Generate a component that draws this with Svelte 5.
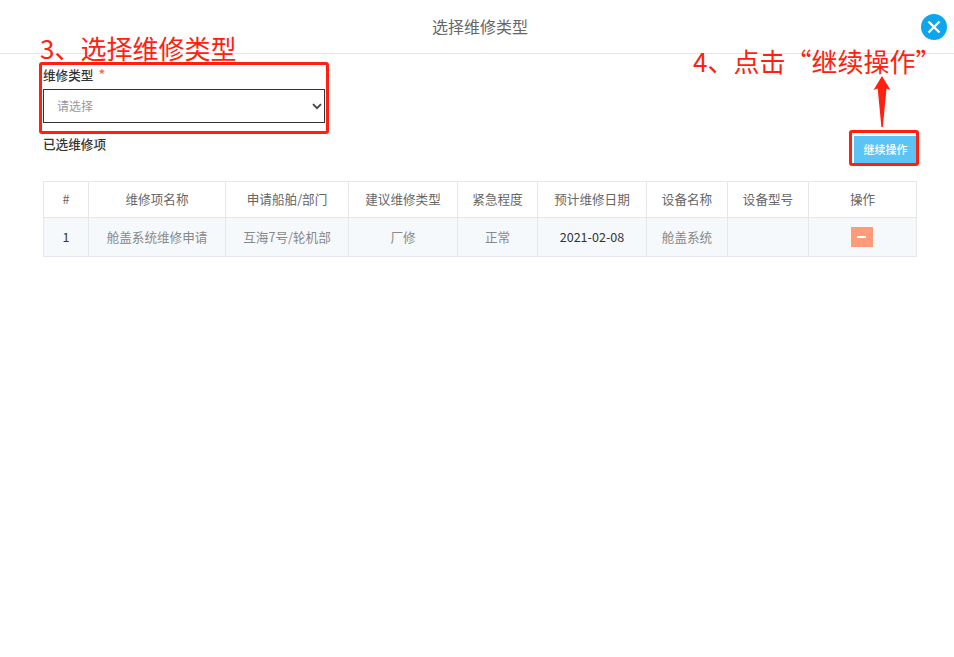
<script>
	const columns = ['#', '维修项名称', '申请船舶/部门', '建议维修类型', '紧急程度', '预计维修日期', '设备名称', '设备型号', '操作'];
	const rows = [
		{ no: '1', name: '舱盖系统维修申请', dept: '互海7号/轮机部', type: '厂修', level: '正常', date: '2021-02-08', device: '舱盖系统', model: '' }
	];
</script>

<div class="page">
	<header class="head">
		<h2>选择维修类型</h2>
		<button class="close" aria-label="关闭">
			<svg width="26" height="26" viewBox="0 0 26 26">
				<circle cx="13" cy="13" r="13" fill="#0ea5ec" />
				<path d="M7.5 7.5 18.5 18.5M18.5 7.5 7.5 18.5" stroke="#fff" stroke-width="2.4" fill="none" />
			</svg>
		</button>
	</header>

	<section class="body">
		<div class="field">
			<div class="label">维修类型<span class="req">*</span></div>
			<div class="select-wrap">
				<select class="select">
					<option>请选择</option>
				</select>
				<svg class="chevron" width="10" height="7" viewBox="0 0 10 7">
					<path d="M1 1.2 5 5.2 9 1.2" stroke="#444" stroke-width="1.8" fill="none" />
				</svg>
			</div>
		</div>

		<div class="bar">
			<span class="bar-title">已选维修项</span>
			<button class="go">继续操作</button>
		</div>

		<table>
			<colgroup>
				<col style="width:45px" />
				<col style="width:137px" />
				<col style="width:123px" />
				<col style="width:109px" />
				<col style="width:80px" />
				<col style="width:109px" />
				<col style="width:81px" />
				<col style="width:81px" />
				<col />
			</colgroup>
			<thead>
				<tr>
					{#each columns as c}
						<th>{c}</th>
					{/each}
				</tr>
			</thead>
			<tbody>
				{#each rows as r}
					<tr>
						<td class="dark">{r.no}</td>
						<td>{r.name}</td>
						<td>{r.dept}</td>
						<td>{r.type}</td>
						<td>{r.level}</td>
						<td class="dark">{r.date}</td>
						<td>{r.device}</td>
						<td>{r.model}</td>
						<td><button class="minus" aria-label="移除"><i></i></button></td>
					</tr>
				{/each}
			</tbody>
		</table>
	</section>

	<!-- annotations drawn on top of the screenshot -->
	<div class="note note-3">3、选择维修类型</div>
	<div class="note note-4">4、点击“继续操作”</div>
	<div class="mark mark-select"></div>
	<div class="mark mark-btn"></div>
	<svg class="arrow" width="18" height="52" viewBox="0 0 18 52">
		<path d="M9 0 17.5 14 13.5 12.5 9.8 51H8.4L4.7 12.5 0.5 14Z" fill="#ff2010" />
	</svg>
</div>

<style>
	:global(body) {
		margin: 0;
		background: #fff;
	}

	.page {
		position: relative;
		width: 954px;
		height: 657px;
		overflow: hidden;
		font-family: "Noto Sans CJK SC", "Liberation Sans", sans-serif;
		color: #333;
	}

	.head {
		height: 53px;
		border-bottom: 1px solid #e5e5e5;
		display: flex;
		align-items: center;
		justify-content: center;
		position: relative;
	}

	h2 {
		margin: -2px 0 0 6px;
		font-size: 16px;
		font-weight: 400;
		color: #666;
	}

	.close {
		position: absolute;
		left: 921px;
		top: 14px;
		width: 26px;
		height: 26px;
		padding: 0;
		border: 0;
		background: none;
		line-height: 0;
	}

	.body {
		padding: 12px 37px 0 43px;
	}

	.label {
		height: 23px;
		font-size: 12.6px;
		line-height: 17px;
		font-weight: 500;
		color: #333;
	}

	.req {
		margin-left: 5px;
		font-size: 14px;
		color: #f0694a;
	}

	.select-wrap {
		position: relative;
		width: 282px;
	}

	.select {
		display: block;
		appearance: none;
		width: 282px;
		height: 34px;
		padding: 0 0 2px 13px;
		border: 1px solid #333;
		border-radius: 0;
		background: #fff;
		font-family: inherit;
		font-size: 12px;
		color: #999;
	}

	.chevron {
		position: absolute;
		right: 3px;
		top: 14px;
	}

	.bar {
		display: flex;
		justify-content: space-between;
		align-items: flex-start;
		height: 58px;
		padding-top: 13px;
		box-sizing: border-box;
	}

	.bar-title {
		margin-top: -1px;
		font-size: 12.6px;
		line-height: 17px;
		font-weight: 500;
		color: #333;
	}

	.go {
		width: 63px;
		height: 28px;
		padding: 0 0 2px;
		border: 0;
		background: #5bc4f5;
		color: #fff;
		font-family: inherit;
		font-size: 11px;
		font-weight: 500;
	}

	table {
		width: 874px;
		border-collapse: collapse;
		table-layout: fixed;
		font-size: 12.6px;
	}

	th,
	td {
		border: 1px solid #e4e7ec;
		padding: 0 0 2px;
		text-align: center;
		font-weight: 400;
	}

	th {
		height: 33px;
		color: #666;
	}

	td {
		height: 36px;
		background: #f5f9fc;
		color: #888;
	}

	td.dark {
		color: #333;
	}

	.minus {
		display: inline-flex;
		align-items: center;
		justify-content: center;
		width: 22px;
		height: 20px;
		margin-right: 2px;
		padding: 0;
		border: 0;
		background: #ff9a7b;
		vertical-align: middle;
	}

	.minus i {
		display: block;
		width: 9px;
		height: 2px;
		background: #fff;
	}

	.note {
		position: absolute;
		color: #ff2010;
		font-size: 26px;
		line-height: 30px;
		white-space: nowrap;
	}

	.note-3 {
		left: 40px;
		top: 33px;
	}

	.note-4 {
		left: 693px;
		top: 46px;
	}

	.mark {
		position: absolute;
		box-sizing: border-box;
		border: 3px solid #ff2010;
		border-radius: 3px;
	}

	.mark-select {
		left: 39px;
		top: 62px;
		width: 290px;
		height: 72px;
	}

	.mark-btn {
		left: 849px;
		top: 130px;
		width: 70px;
		height: 36px;
	}

	.arrow {
		position: absolute;
		left: 873px;
		top: 76px;
	}
</style>
